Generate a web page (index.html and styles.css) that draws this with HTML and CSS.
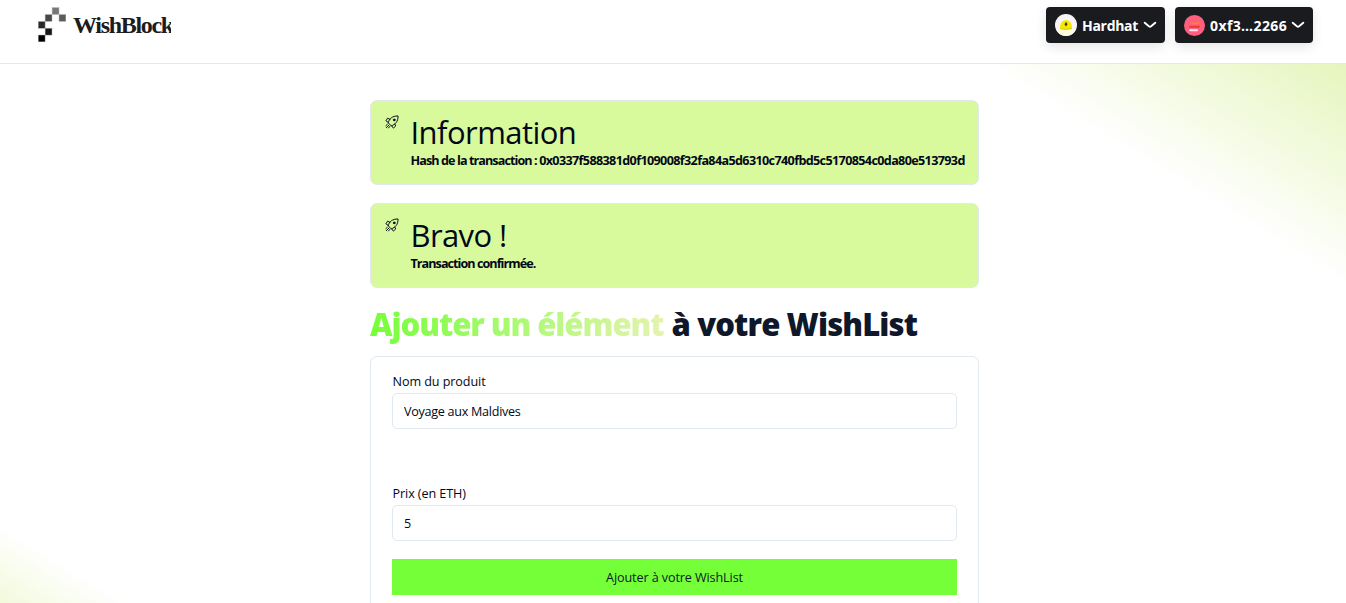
FILE: index.html
```html
<!DOCTYPE html>
<html lang="fr">
<head>
<meta charset="utf-8">
<title>WishBlock</title>
<link rel="stylesheet" href="styles.css">
</head>
<body>
<svg class="defs" width="0" height="0" aria-hidden="true">
  <symbol id="rocket" viewBox="0 0 16 16">
    <g fill="none" stroke="currentColor" stroke-width="1.1" stroke-linecap="round" stroke-linejoin="round">
      <path d="M3.8 8.5C4.6 4.4 8.4 1 14.9 1.1C15 7.4 11.8 11 7.6 12.3Z"/>
      <path d="M5.6 4.9L3 3.6L1 6.6L3.8 8.5M11.2 10.3L12.3 12.5L9.6 15L7.6 12.3"/>
      <path d="M2.7 10.6L1 12.2M4.3 11.7L1.5 14.5M5.6 13L4 14.8"/>
      <circle cx="10.5" cy="5.6" r="1" fill="currentColor"/>
    </g>
  </symbol>
  <symbol id="chevron" viewBox="0 0 14 8">
    <path d="M1.7 1.7L5.9 5.3Q7 6.1 8.1 5.3L12.3 1.7" fill="none" stroke="currentColor" stroke-width="1.9" stroke-linecap="round"/>
  </symbol>
</svg>
<header class="header">
  <a class="logo">
    <svg class="logo-mark" viewBox="0 0 28 35" width="28" height="35">
      <g stroke="#b5b5b5" stroke-width=".5">
        <rect x="14.1" y=".6" width="6.9" height="6.9" fill="#777"/>
        <rect x="7.1" y="7.5" width="6.9" height="6.9" fill="#484848"/>
        <rect x="21" y="7.5" width="6.9" height="6.9" fill="#5c5c5c"/>
        <rect x=".2" y="14.4" width="6.9" height="6.9" fill="#292929"/>
        <rect x="7.1" y="21.2" width="6.9" height="6.9" fill="#151515"/>
        <rect x=".2" y="28" width="6.9" height="6.9" fill="#000"/>
      </g>
    </svg>
    <span class="logo-text">WishBlock</span>
  </a>
  <div class="wallet">
    <button class="pill pill-chain">
      <svg class="badge" viewBox="0 0 22 22" width="22" height="22">
        <circle cx="11" cy="11" r="11" fill="#f7f5fa"/>
        <path d="M1 15.5A11 11 0 0 0 21 15.5Z" fill="#fbfce0"/>
        <path d="M5 14.5V12.5A6 6.5 0 0 1 17 12.5V14.5Q11 16.2 5 14.5Z" fill="#f6e900"/>
        <path d="M5 14Q11 15.6 17 14V15Q11 16.3 5 15Z" fill="#d9c900"/>
        <path d="M11 7.8L12.5 10.3L11 12.6L9.5 10.3Z" fill="#3b3a08"/>
      </svg>
      <span class="pill-name chain-name">Hardhat</span>
      <svg class="chevron"><use href="#chevron"/></svg>
    </button>
    <button class="pill pill-account">
      <svg class="badge" viewBox="0 0 22 22" width="21" height="21">
        <circle cx="11" cy="11" r="11" fill="#ff5f7e"/>
        <g fill="none" stroke-width="2.1" stroke-linecap="round">
          <path d="M8.2 8.7H16.2" stroke="#ff7a35"/>
          <path d="M6.3 12.3H15.6" stroke="#e83a3a"/>
          <path d="M6.5 16H13.6" stroke="#ffe9ee"/>
        </g>
      </svg>
      <span class="pill-name account-name">0xf3…2266</span>
      <svg class="chevron"><use href="#chevron"/></svg>
    </button>
  </div>
</header>
<main class="main">
  <div class="content">
    <section class="alert">
      <svg class="rocket"><use href="#rocket"/></svg>
      <div>
        <h5 class="alert-title title-info">Information</h5>
        <p class="alert-text"><span class="hash-label">Hash de la transaction : </span><span class="hash-value">0x0337f588381d0f109008f32fa84a5d6310c740fbd5c5170854c0da80e513793d</span></p>
      </div>
    </section>
    <section class="alert">
      <svg class="rocket"><use href="#rocket"/></svg>
      <div>
        <h5 class="alert-title title-bravo">Bravo !</h5>
        <p class="alert-text text-confirmed">Transaction confirmée.</p>
      </div>
    </section>
    <h1 class="heading"><span class="accent">Ajouter un élément</span> <span class="rest">à votre WishList</span></h1>
    <form class="card">
      <label class="label" for="product">Nom du produit</label>
      <input class="input" id="product" value="Voyage aux Maldives">
      <label class="label label-price" for="price">Prix (en ETH)</label>
      <input class="input" id="price" value="5">
      <button class="submit" type="button">Ajouter à votre WishList</button>
    </form>
  </div>
</main>
</body>
</html>
```

FILE: styles.css
```css
* { box-sizing: border-box; }
html, body { height: 100%; }
body {
  margin: 0;
  display: flex;
  flex-direction: column;
  overflow: hidden;
  background: #fff;
  color: #020817;
  font-family: "Open Sans", "Noto Sans", sans-serif;
}
.defs { position: absolute; }
.header {
  flex: none;
  display: flex;
  justify-content: space-between;
  align-items: flex-start;
  height: 64px;
  padding: 7px 33px 0 38px;
  border-bottom: 1px solid #e2e8f0;
}
.logo { display: flex; width: 133px; overflow: hidden; }
.logo-mark { flex: none; }
.logo-text {
  margin-left: 7px;
  font: bold 24px/36px "Liberation Serif", serif;
  letter-spacing: -1.3px;
  color: #1c1c1c;
  white-space: nowrap;
}
.wallet { display: flex; gap: 10px; }
.pill {
  display: flex;
  align-items: center;
  height: 36px;
  padding: 0 8px 0 9px;
  border: 0;
  border-radius: 4px;
  background: #1a1b1f;
  color: #fff;
  font: bold 14px/20px "Open Sans", sans-serif;
  box-shadow: 0 4px 12px rgba(0, 0, 0, .1);
  white-space: nowrap;
}
.pill-chain { width: 119px; }
.pill-account { width: 138px; }
.pill-name { padding-top: 2px; }
.chain-name { letter-spacing: -0.3px; }
.account-name { letter-spacing: 0.4px; }
.badge { flex: none; margin-right: 5px; }
.pill .chevron { flex: none; width: 14px; height: 8px; margin-left: auto; }
.main {
  flex: 1;
  min-height: 0;
  padding: 36px 0 0 370px;
  background: linear-gradient(31.5deg, #f2fadb 0, #fff 67px, #fff calc(100% - 189px), #e6f5bd 100%);
}
.content { width: 609px; }
.alert {
  display: flex;
  height: 85px;
  margin-bottom: 18px;
  padding: 14px 0 0 14px;
  border: 1px solid #e2e8f0;
  border-radius: 7px;
  background: #d9f99d;
}
.rocket { flex: none; width: 14px; height: 14px; margin-right: 11.5px; }
.alert-title { margin: -1px 0 0; font-size: 31px; font-weight: 400; line-height: 37px; }
.title-info { letter-spacing: -0.55px; }
.title-bravo { letter-spacing: -0.6px; }
.alert-text { margin: 0; font-size: 12.6px; font-weight: 700; line-height: 19px; white-space: nowrap; }
.hash-label { letter-spacing: -0.91px; }
.hash-value { letter-spacing: -0.636px; }
.text-confirmed { letter-spacing: -0.95px; }
.heading {
  margin: 0 0 14px;
  font-size: 31px;
  font-weight: 800;
  line-height: 36px;
  color: #0f172a;
  white-space: nowrap;
}
.accent {
  background: linear-gradient(to right, #75ff38, #e4f3b0);
  background-clip: text;
  -webkit-background-clip: text;
  color: transparent;
  letter-spacing: -1.04px;
}
.rest { letter-spacing: -0.88px; }
.card {
  display: flex;
  flex-direction: column;
  height: 300px;
  padding: 16px 21px;
  border: 1px solid #e2e8f0;
  border-radius: 7px;
  background: #fff;
}
.label { font-size: 12.6px; font-weight: 500; line-height: 18px; margin-bottom: 2px; padding-left: .5px; letter-spacing: -0.08px; }
.label-price { margin-top: 56px; }
.input {
  width: 100%;
  height: 36px;
  padding: 0 11px;
  border: 1px solid #e2e8f0;
  border-radius: 5px;
  background: #fff;
  color: #020817;
  font: 400 12.6px/18px "Open Sans", sans-serif;
  letter-spacing: -0.28px;
}
.submit {
  height: 36px;
  margin-top: 18px;
  padding: 2px 0 0;
  border: 0;
  background: #75ff38;
  color: #0f172a;
  font: 500 12.6px/18px "Open Sans", sans-serif;
  letter-spacing: -0.1px;
}
```
